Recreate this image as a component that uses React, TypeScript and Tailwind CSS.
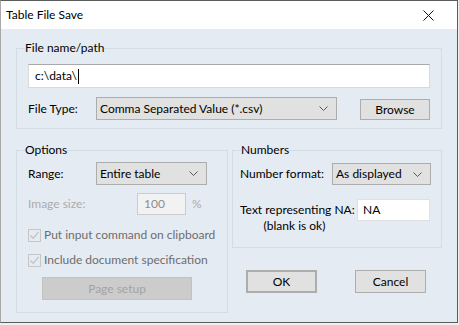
function Chevron() {
  return (
    <svg width="9" height="5" viewBox="0 0 9 5" className="shrink-0">
      <path d="M0.5 0.5 L4.5 4.5 L8.5 0.5" fill="none" stroke="#5a5a5a" strokeWidth="1" />
    </svg>
  )
}

function Select({ value, className }: { value: string; className: string }) {
  return (
    <div className={`flex items-center justify-between bg-[#e1e1e1] border border-[#adadad] pl-[3px] pr-[8px] ${className}`}>
      <span>{value}</span>
      <Chevron />
    </div>
  )
}

function Button({ label, className }: { label: string; className: string }) {
  return (
    <button className={`flex items-center justify-center bg-[#e1e1e1] border border-[#adadad] ${className}`}>
      {label}
    </button>
  )
}

function DisabledCheck({ label }: { label: string }) {
  return (
    <label className="flex items-center gap-[3px] h-[16px] text-[#6d6d6d] whitespace-nowrap">
      <span className="w-[13px] h-[13px] border border-[#c6c6c6] flex items-center justify-center shrink-0">
        <svg width="11" height="11" viewBox="0 0 11 11">
          <path d="M1.5 5.5 L4.2 8.3 L9.6 1.8" fill="none" stroke="#c2c2c2" strokeWidth="1.3" />
        </svg>
      </span>
      {label}
    </label>
  )
}

export default function App() {
  return (
    <div className="w-[459px] h-[325px] bg-[#f0f0f0]" style={{ fontFamily: 'Lato, "Liberation Sans", sans-serif' }}>
      <div className="w-[458px] h-[323px] flex flex-col border border-[#5c5c5c] border-l-[#a8a8a8] bg-[#e5ebf3] text-[12px] leading-[14px] text-black whitespace-nowrap">
        {/* Title bar */}
        <div className="h-[28px] bg-white flex items-center justify-between pl-[5px] pr-[23px] shrink-0">
          <span className="text-[12px]">Table File Save</span>
          <svg width="11" height="11" viewBox="0 0 11 11">
            <path d="M0.5 0.5 L10.5 10.5 M10.5 0.5 L0.5 10.5" stroke="#111" strokeWidth="1" />
          </svg>
        </div>

        <div className="flex-1 px-[15px] pt-[12px]">
          <fieldset className="border border-[#d3dbe5] pl-[11px] pr-[11px] pb-[8px]">
            <legend className="ml-[-3px] px-[0px] h-[14px]">File name/path</legend>
            <div className="mt-[9px] h-[24px] bg-white border border-[#d9d9d9] border-t-[#a9a9a9] flex items-center pl-[6px]">
              c:\data\<span className="inline-block w-[1px] h-[15px] bg-black ml-[1px]" />
            </div>
            <div className="mt-[9px] flex items-center justify-between h-[23px]">
              <div className="flex items-center">
                <span className="w-[68px]">File Type:</span>
                <Select value="Comma Separated Value (*.csv)" className="w-[241px] h-[23px]" />
              </div>
              <Button label="Browse" className="w-[70px] h-[21px] mt-[2px]" />
            </div>
          </fieldset>

          <div className="mt-[14px] flex gap-[4px]">
            <fieldset className="w-[212px] h-[170px] border border-[#d3dbe5] pl-[11px] pr-[11px]">
              <legend className="ml-[-3px] h-[14px]">Options</legend>
              <div className="mt-[5px] flex items-center h-[23px]">
                <span className="w-[68px]">Range:</span>
                <Select value="Entire table" className="w-[111px] h-[23px]" />
              </div>
              <div className="mt-[8px] flex items-center h-[22px] text-[#ababab]">
                <span className="w-[109px]">Image size:</span>
                <div className="w-[49px] h-[22px] bg-[#f2f2f2] border border-[#cccccc] flex items-center pl-[6px] text-[#8d8d8d]">100</div>
                <span className="ml-[6px]">%</span>
              </div>
              <div className="mt-[12px]">
                <DisabledCheck label="Put input command on clipboard" />
              </div>
              <div className="mt-[9px]">
                <DisabledCheck label="Include document specification" />
              </div>
              <div className="mt-[9px] ml-[14px] w-[150px] h-[23px] bg-[#cccccc] border border-[#c2c2c2] flex items-center justify-center text-[#a3a3a3]">
                Page setup
              </div>
            </fieldset>

            <div className="w-[210px] flex flex-col">
              <fieldset className="h-[105px] border border-[#d3dbe5] pl-[7px] pr-[10px]">
                <legend className="ml-[1px] h-[14px]">Numbers</legend>
                <div className="mt-[6px] flex items-center h-[22px]">
                  <span className="w-[92px]">Number format:</span>
                  <Select value="As displayed" className="w-[99px] h-[22px]" />
                </div>
                <div className="mt-[14px] flex items-start">
                  <div className="w-[117px] mt-[3px] leading-[16px] flex flex-col items-center">
                    <span className="self-start">Text representing NA:</span>
                    <span className="-ml-[8px]">(blank is ok)</span>
                  </div>
                  <div className="w-[73px] h-[22px] bg-white border border-[#e0e0e0] flex items-center pl-[5px]">NA</div>
                </div>
              </fieldset>
              <div className="mt-[22px] flex">
                <Button label="OK" className="ml-[14px] w-[71px] h-[23px] border-2 border-[#0078d7]" />
                <Button label="Cancel" className="ml-[38px] w-[71px] h-[23px]" />
              </div>
            </div>
          </div>
        </div>
      </div>
    </div>
  )
}
